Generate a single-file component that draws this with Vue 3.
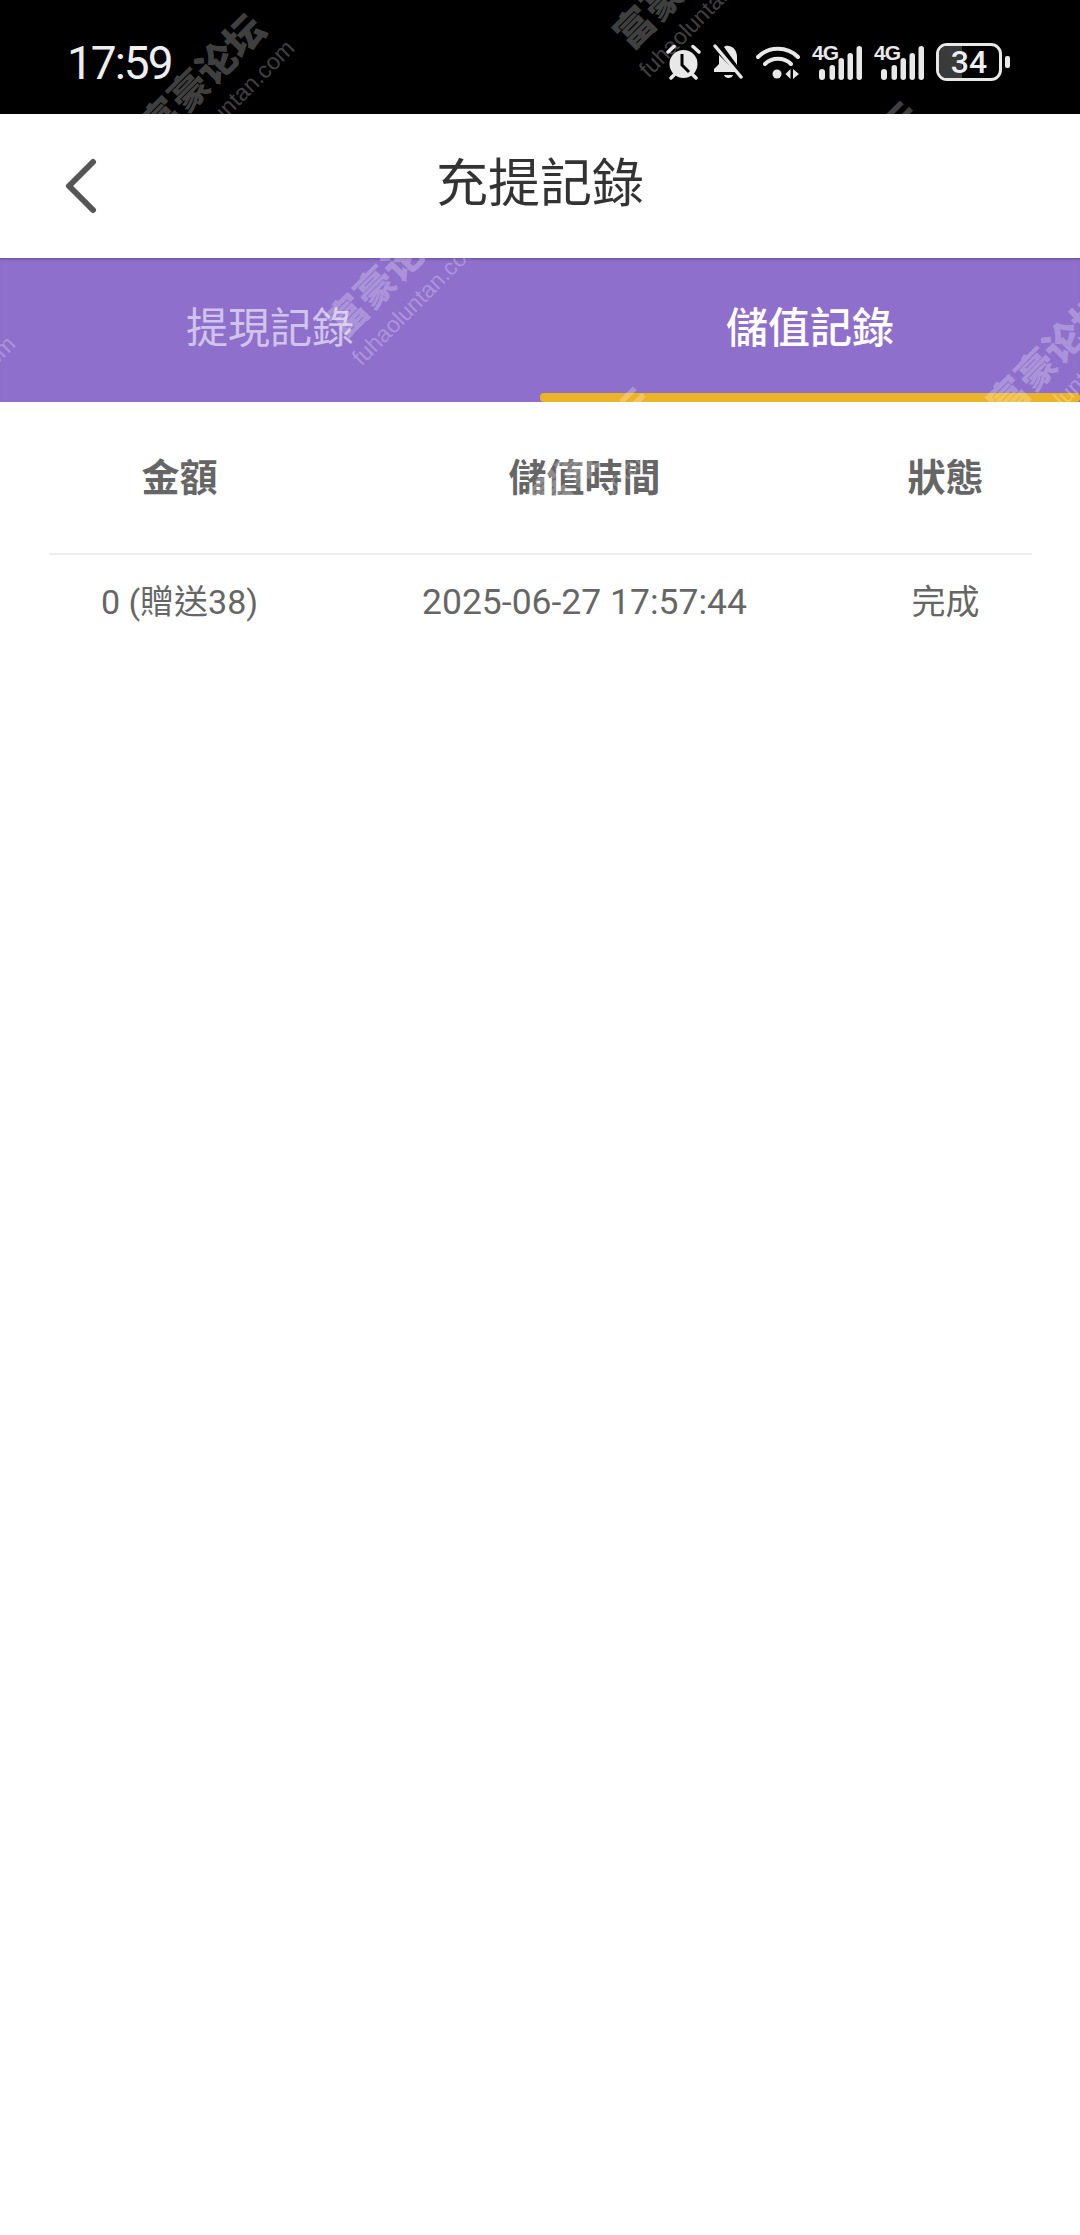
<script setup>
const columns = ['金額', '儲值時間', '狀態']
const records = [{ amount: '0 (贈送38)', time: '2025-06-27 17:57:44', status: '完成' }]
const marks = [
  { x: 213, y: 87 },
  { x: 686, y: -4 },
  { x: 399, y: 284 },
  { x: 1060, y: 366 },
  { x: 869, y: 175 },
  { x: 602, y: 461 },
  { x: -66, y: 383 }
]
</script>

<template>
  <div class="page">
    <div class="status">
      <span class="time">17:59</span>
      <div class="icons">
        <svg class="alarm" width="35" height="36" viewBox="0 0 35 36">
          <circle cx="17.500" cy="20" r="14" fill="#e8e8e8" />
          <path d="M16 10v11l7 7" fill="none" stroke="#000" stroke-width="3" />
          <path d="M2 8 8 2.500M33 8 27 2.500M5 34l3-3M30 34l-3-3" fill="none" stroke="#e8e8e8" stroke-width="3.500" stroke-linecap="round" />
        </svg>
        <svg class="bell" width="30" height="36" viewBox="0 0 30 36">
          <path d="M11 3c1-1 3-1.500 5-1 5 1 8 5 8 11v8zM6 11v9l-5 5v3h22z" fill="#e8e8e8" />
          <path d="M11 31h9c-1 4-8 4-9 0z" fill="#e8e8e8" />
          <path d="M2 2 28 33" stroke="#e8e8e8" stroke-width="3.500" stroke-linecap="round" />
        </svg>
        <svg class="wifi" width="44" height="36" viewBox="0 0 44 36">
          <path d="M2 13C13 2 31 2 42 13M9 20c7-7 19-7 26 0" fill="none" stroke="#e8e8e8" stroke-width="4" stroke-linecap="round" />
          <circle cx="21" cy="30" r="4.500" fill="#e8e8e8" />
          <path d="M34.500 25v10l-5-5zM37 25v10l6-5z" fill="#e8e8e8" />
        </svg>
        <div v-for="n in 2" :key="n" class="signal">
          <span class="net">4G</span>
          <svg width="50" height="36" viewBox="0 0 50 36">
            <rect x="7" y="25" width="6" height="11" rx="3" />
            <rect x="17.500" y="21" width="5.500" height="15" rx="2.750" />
            <rect x="26.500" y="14" width="5.500" height="22" rx="2.750" />
            <rect x="35.500" y="9" width="5.500" height="27" rx="2.750" />
            <rect x="44.500" y="2" width="5.500" height="34" rx="2.750" />
          </svg>
        </div>
        <div class="battery">
          <div class="cell"><div class="level"></div><span class="pct">34</span></div>
          <div class="nub"></div>
        </div>
      </div>
    </div>

    <header class="nav">
      <svg class="back" width="32" height="56" viewBox="0 0 32 56">
        <path d="M28 4 4 28l24 24" fill="none" stroke="#555" stroke-width="6" stroke-linecap="round" stroke-linejoin="round" />
      </svg>
      <h1 class="title">充提記錄</h1>
    </header>

    <nav class="tabs">
      <div class="tab">提現記錄</div>
      <div class="tab active">儲值記錄</div>
    </nav>

    <section class="table">
      <div class="row head">
        <div v-for="c in columns" :key="c">{{ c }}</div>
      </div>
      <div v-for="r in records" :key="r.time" class="row body">
        <div>{{ r.amount }}</div>
        <div class="when">{{ r.time }}</div>
        <div>{{ r.status }}</div>
      </div>
    </section>

    <div class="overlay">
      <div v-for="(m, i) in marks" :key="i" class="mark" :style="{ left: m.x + 'px', top: m.y + 'px' }">
        <div class="mark-big">富豪论坛</div>
        <div class="mark-small">fuhaoluntan.com</div>
      </div>
    </div>
  </div>
</template>

<style>
html, body { margin: 0; background: #fff; }
</style>

<style scoped>
.page {
  position: relative;
  width: 1080px;
  height: 2235px;
  overflow: hidden;
  background: #fff;
  display: flex;
  flex-direction: column;
  font-family: Roboto, "Noto Sans CJK TC", sans-serif;
}
.status {
  height: 114px;
  flex: none;
  background: #000;
  display: flex;
  align-items: center;
  justify-content: space-between;
  padding: 10px 70px 0 67px;
  box-sizing: border-box;
}
.time {
  color: #eee;
  font-size: 46px;
  letter-spacing: -2px;
  line-height: 1;
  margin-top: 1px;
}
.icons {
  display: flex;
  align-items: center;
}
.alarm { margin-right: 12px; }
.bell { margin-right: 13px; }
.wifi { margin-right: 12px; }
.signal {
  position: relative;
  width: 50px;
  height: 36px;
  margin-right: 12px;
}
.signal svg { display: block; fill: #e8e8e8; }
.net {
  position: absolute;
  left: 0;
  top: 0;
  color: #e8e8e8;
  font-family: "Liberation Sans", sans-serif;
  font-weight: 700;
  font-size: 21px;
  letter-spacing: -1px;
  line-height: 17px;
}
.battery {
  display: flex;
  align-items: center;
  gap: 3px;
}
.cell {
  position: relative;
  width: 66px;
  height: 38px;
  box-sizing: border-box;
  border: 3px solid #e8e8e8;
  border-radius: 11px;
  overflow: hidden;
  display: flex;
  align-items: center;
  justify-content: center;
}
.level {
  position: absolute;
  left: 0;
  top: 0;
  bottom: 0;
  width: 38%;
  background: #3a3a3a;
}
.pct {
  position: relative;
  color: #eee;
  font-weight: 500;
  font-size: 32px;
  line-height: 1;
}
.nub {
  width: 5px;
  height: 12px;
  border-radius: 2px;
  background: #e8e8e8;
}
.nav {
  position: relative;
  height: 144px;
  flex: none;
  display: flex;
  align-items: center;
  justify-content: center;
  background: #fff;
}
.back {
  position: absolute;
  left: 65px;
  top: 44px;
}
.title {
  margin: 0;
  color: #333;
  font-size: 52px;
  font-weight: 400;
  line-height: 1;
  margin-top: -2px;
}
.tabs {
  height: 144px;
  flex: none;
  display: flex;
  background: #8e6fcc;
  box-shadow: inset 0 3px 3px -2px rgba(60, 40, 90, 0.45);
}
.tab {
  position: relative;
  flex: 1;
  display: flex;
  align-items: center;
  justify-content: center;
  padding-bottom: 2px;
  box-sizing: border-box;
  color: rgba(255, 255, 255, 0.6);
  font-size: 42px;
  line-height: 1;
}
.tab.active {
  color: #fff;
  font-weight: 500;
}
.tab.active::after {
  content: "";
  position: absolute;
  left: 0;
  right: 0;
  bottom: 0;
  height: 9px;
  border-radius: 4px;
  background: #ebb428;
}
.table {
  margin: 0 48px 0 49px;
  display: flex;
  flex-direction: column;
}
.row {
  display: grid;
  grid-template-columns: 261px 549px 1fr;
  text-align: center;
  color: #666;
}
.head {
  height: 153px;
  box-sizing: border-box;
  align-items: center;
  border-bottom: 2px solid #eee;
  font-size: 38px;
  font-weight: 700;
  line-height: 1;
}
.body {
  padding-top: 27px;
  font-size: 34px;
  line-height: 40px;
}
.when { font-size: 35.500px; }
.overlay {
  position: absolute;
  inset: 0;
  pointer-events: none;
}
.mark {
  position: absolute;
  width: 0;
  height: 0;
  display: flex;
  flex-direction: column;
  align-items: center;
  justify-content: center;
  transform: rotate(-45deg);
  white-space: nowrap;
  color: rgba(255, 255, 255, 0.27);
}
.mark-big {
  font-family: "Noto Sans CJK SC", sans-serif;
  font-weight: 900;
  font-size: 39px;
  line-height: 40px;
}
.mark-small {
  margin-top: 8px;
  font-family: "Liberation Sans", sans-serif;
  font-size: 23px;
  line-height: 26px;
}
</style>
